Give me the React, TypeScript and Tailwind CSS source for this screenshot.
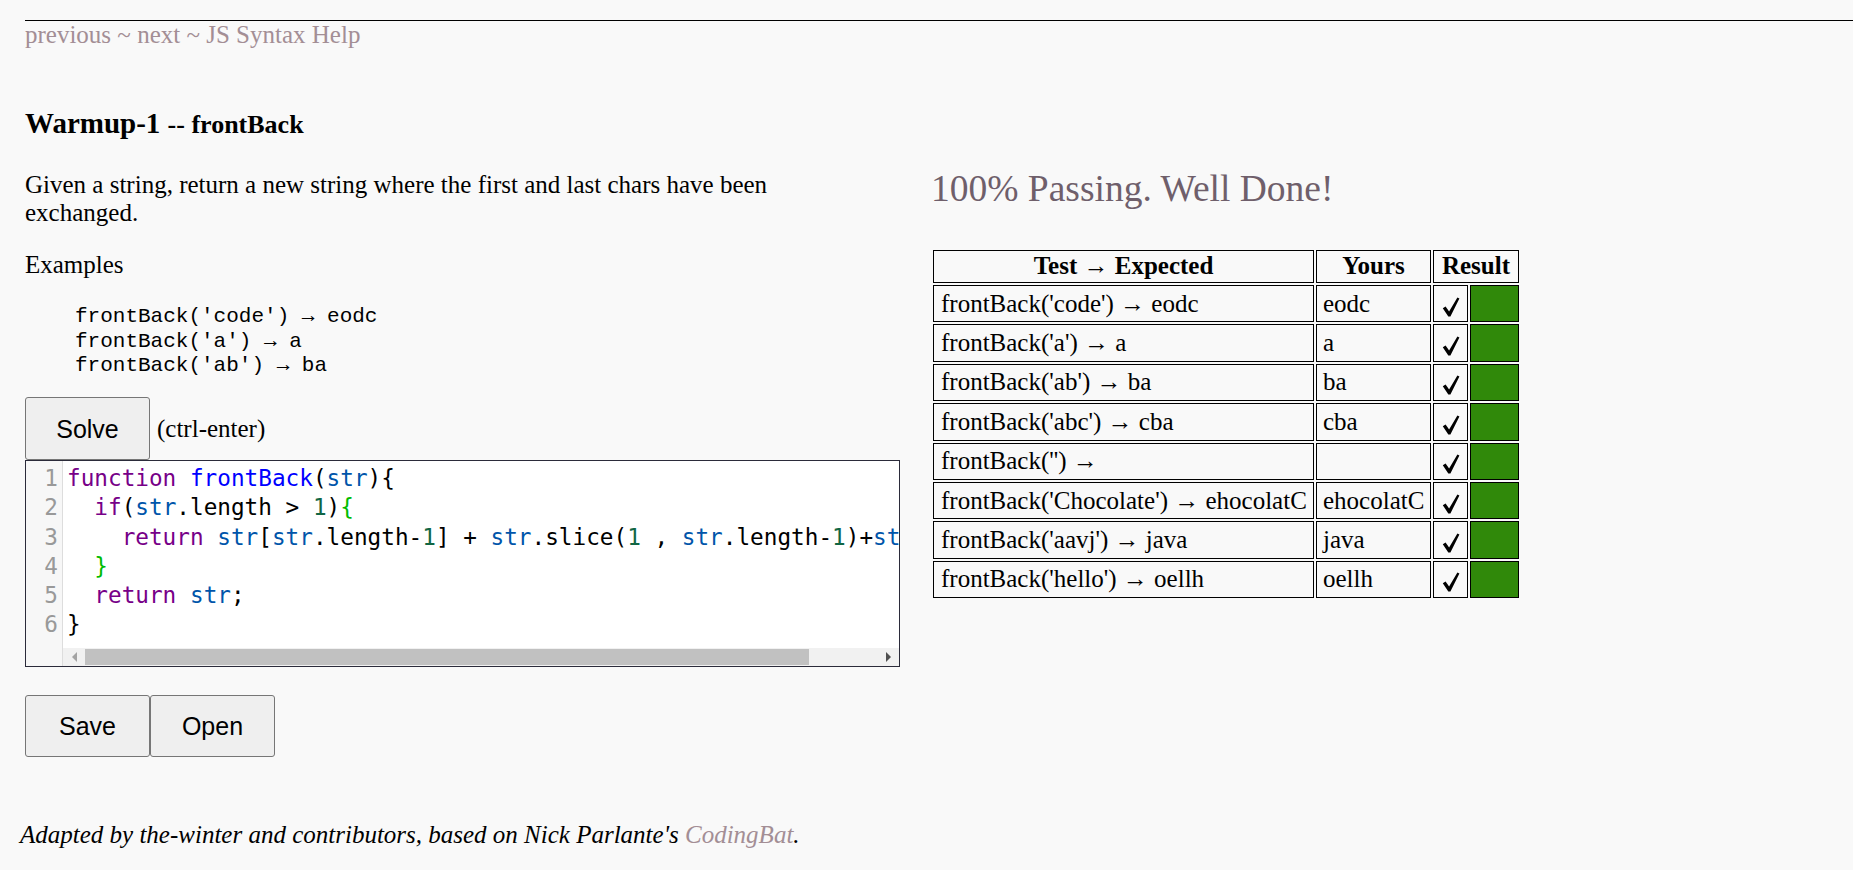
import React from "react";

type Tok = [string, string?];

const KW = "text-[#770088]";
const DEF = "text-[#0000ff]";
const VAR = "text-[#0055aa]";
const NUM = "text-[#116644]";
const BR = "text-[#00bb00]";

const codeLines: Tok[][] = [
   [["function", KW], [" "], ["frontBack", DEF], ["("], ["str", VAR], ["){"]],
   [["  "], ["if", KW], ["("], ["str", VAR], [".length > "], ["1", NUM], [")"], ["{", BR]],
   [
      ["    "],
      ["return", KW],
      [" "],
      ["str", VAR],
      ["["],
      ["str", VAR],
      [".length-"],
      ["1", NUM],
      ["] + "],
      ["str", VAR],
      [".slice("],
      ["1", NUM],
      [" , "],
      ["str", VAR],
      [".length-"],
      ["1", NUM],
      [")+"],
      ["str", VAR],
      ["["],
      ["0", NUM],
      ["];"],
   ],
   [["  "], ["}", BR]],
   [["  "], ["return", KW], [" "], ["str", VAR], [";"]],
   [["}"]],
];

const tests: [string, string][] = [
   ["frontBack('code') → eodc", "eodc"],
   ["frontBack('a') → a", "a"],
   ["frontBack('ab') → ba", "ba"],
   ["frontBack('abc') → cba", "cba"],
   ["frontBack('') → ", ""],
   ["frontBack('Chocolate') → ehocolatC", "ehocolatC"],
   ["frontBack('aavj') → java", "java"],
   ["frontBack('hello') → oellh", "oellh"],
];

const CheckMark = () => (
   <svg width="18" height="20" viewBox="0 0 18 20" className="inline-block">
      <path d="M0.8 11.2 L3.6 9.6 L7.1 14.6 L15.4 0.6 L17.4 1.6 L8.4 19.4 L6.3 19.4 Z" fill="#000" />
   </svg>
);

const btn =
   "h-[62px] w-[125px] bg-[#efefef] border border-[#767676] rounded-[3px] text-[25px] text-black font-['Liberation_Sans',Arial,sans-serif]";

const App: React.FC = () => {
   return (
      <div className="min-h-screen bg-[#f9f9f9] text-black font-['Liberation_Serif','Times_New_Roman',serif] text-[25px] leading-[28px]">
         <div className="pt-[20px]">
            <div className="ml-[25px] border-t border-black" />
         </div>
         <div className="pl-[25px] text-[#a38e95]">
            <a>previous</a> ~ <a>next</a> ~ <a>JS Syntax Help</a>
         </div>

         <div className="flex">
            {/* left column */}
            <div className="ml-[25px] w-[875px] shrink-0">
               <h2 className="mt-[58.2px] font-bold text-[29px] leading-[32px]">
                  Warmup-1 <span className="text-[26px]">-- frontBack</span>
               </h2>
               <p className="mt-[30.2px] w-[800px]">
                  Given a string, return a new string where the first and last chars have been exchanged.
               </p>
               <p className="mt-[24px]">Examples</p>
               <pre className="mt-[25.9px] pl-[50px] font-['Liberation_Mono','Courier_New',monospace] text-[21px] leading-[24.3px]">
                  {"frontBack('code') → eodc\nfrontBack('a') → a\nfrontBack('ab') → ba"}
               </pre>

               <div className="mt-[19px] flex items-center">
                  <button className={btn + " h-[63px]"}>Solve</button>
                  <span className="ml-[7px]">(ctrl-enter)</span>
               </div>

               {/* code editor */}
               <div className="h-[207px] border border-[#2b2b3a] bg-white flex font-['DejaVu_Sans_Mono',monospace] text-[22.7px] leading-[29.2px]">
                  <div className="w-[37px] shrink-0 bg-[#f7f7f7] border-r border-[#dddddd] pt-[3px] text-right pr-[4px] text-[#999999]">
                     {codeLines.map((_, i) => (
                        <div key={i}>{i + 1}</div>
                     ))}
                  </div>
                  <div className="flex-1 min-w-0 flex flex-col">
                     <div className="flex-1 overflow-hidden pt-[3px] pl-[4px] whitespace-pre">
                        {codeLines.map((line, i) => (
                           <div key={i}>
                              {line.map(([t, c], j) => (
                                 <span key={j} className={c}>
                                    {t}
                                 </span>
                              ))}
                           </div>
                        ))}
                     </div>
                     <div className="h-[18px] bg-[#f1f1f1] flex items-center">
                        <div className="w-[22px] flex justify-center">
                           <div className="w-0 h-0 border-y-[5px] border-y-transparent border-r-[5px] border-r-[#a3a3a3]" />
                        </div>
                        <div className="flex-1 h-[16px] flex">
                           <div className="w-[724px] bg-[#c1c1c1]" />
                        </div>
                        <div className="w-[22px] flex justify-center">
                           <div className="w-0 h-0 border-y-[5px] border-y-transparent border-l-[5px] border-l-[#505050]" />
                        </div>
                     </div>
                  </div>
               </div>

               <div className="mt-[28px] flex">
                  <button className={btn}>Save</button>
                  <button className={btn}>Open</button>
               </div>
            </div>

            {/* right column */}
            <div className="ml-[31px]">
               <h2 className="mt-[119.4px] text-[37.5px] leading-[42px] text-[#6f5f6b]">100% Passing. Well Done!</h2>
               <table className="mt-[37.6px] border-separate border-spacing-[2px] table-fixed w-[590px]">
                  <colgroup>
                     <col className="w-[381px]" />
                     <col className="w-[115px]" />
                     <col className="w-[35px]" />
                     <col className="w-[49px]" />
                  </colgroup>
                  <thead>
                     <tr>
                        <th className="border border-black h-[33px] p-0 font-bold">Test → Expected</th>
                        <th className="border border-black h-[33px] p-0 font-bold">Yours</th>
                        <th colSpan={2} className="border border-black h-[33px] p-0 font-bold">
                           Result
                        </th>
                     </tr>
                  </thead>
                  <tbody>
                     {tests.map(([t, y], i) => (
                        <tr key={i}>
                           <td className="border border-black h-[37.4px] px-[7px] py-0 whitespace-nowrap">{t}</td>
                           <td className="border border-black h-[37.4px] px-[6px] py-0 whitespace-nowrap">{y}</td>
                           <td className="border border-black h-[37.4px] p-0 text-center">
                              <div className="flex justify-center pt-[6px]">
                                 <CheckMark />
                              </div>
                           </td>
                           <td className="border border-black h-[37.4px] p-0 bg-[#30890a]" />
                        </tr>
                     ))}
                  </tbody>
               </table>
            </div>
         </div>

         <p className="mt-[63.5px] ml-[20px] italic pb-[20px]">
            Adapted by the-winter and contributors, based on Nick Parlante's <a className="text-[#a38e95]">CodingBat</a>.
         </p>
      </div>
   );
};

export default App;
